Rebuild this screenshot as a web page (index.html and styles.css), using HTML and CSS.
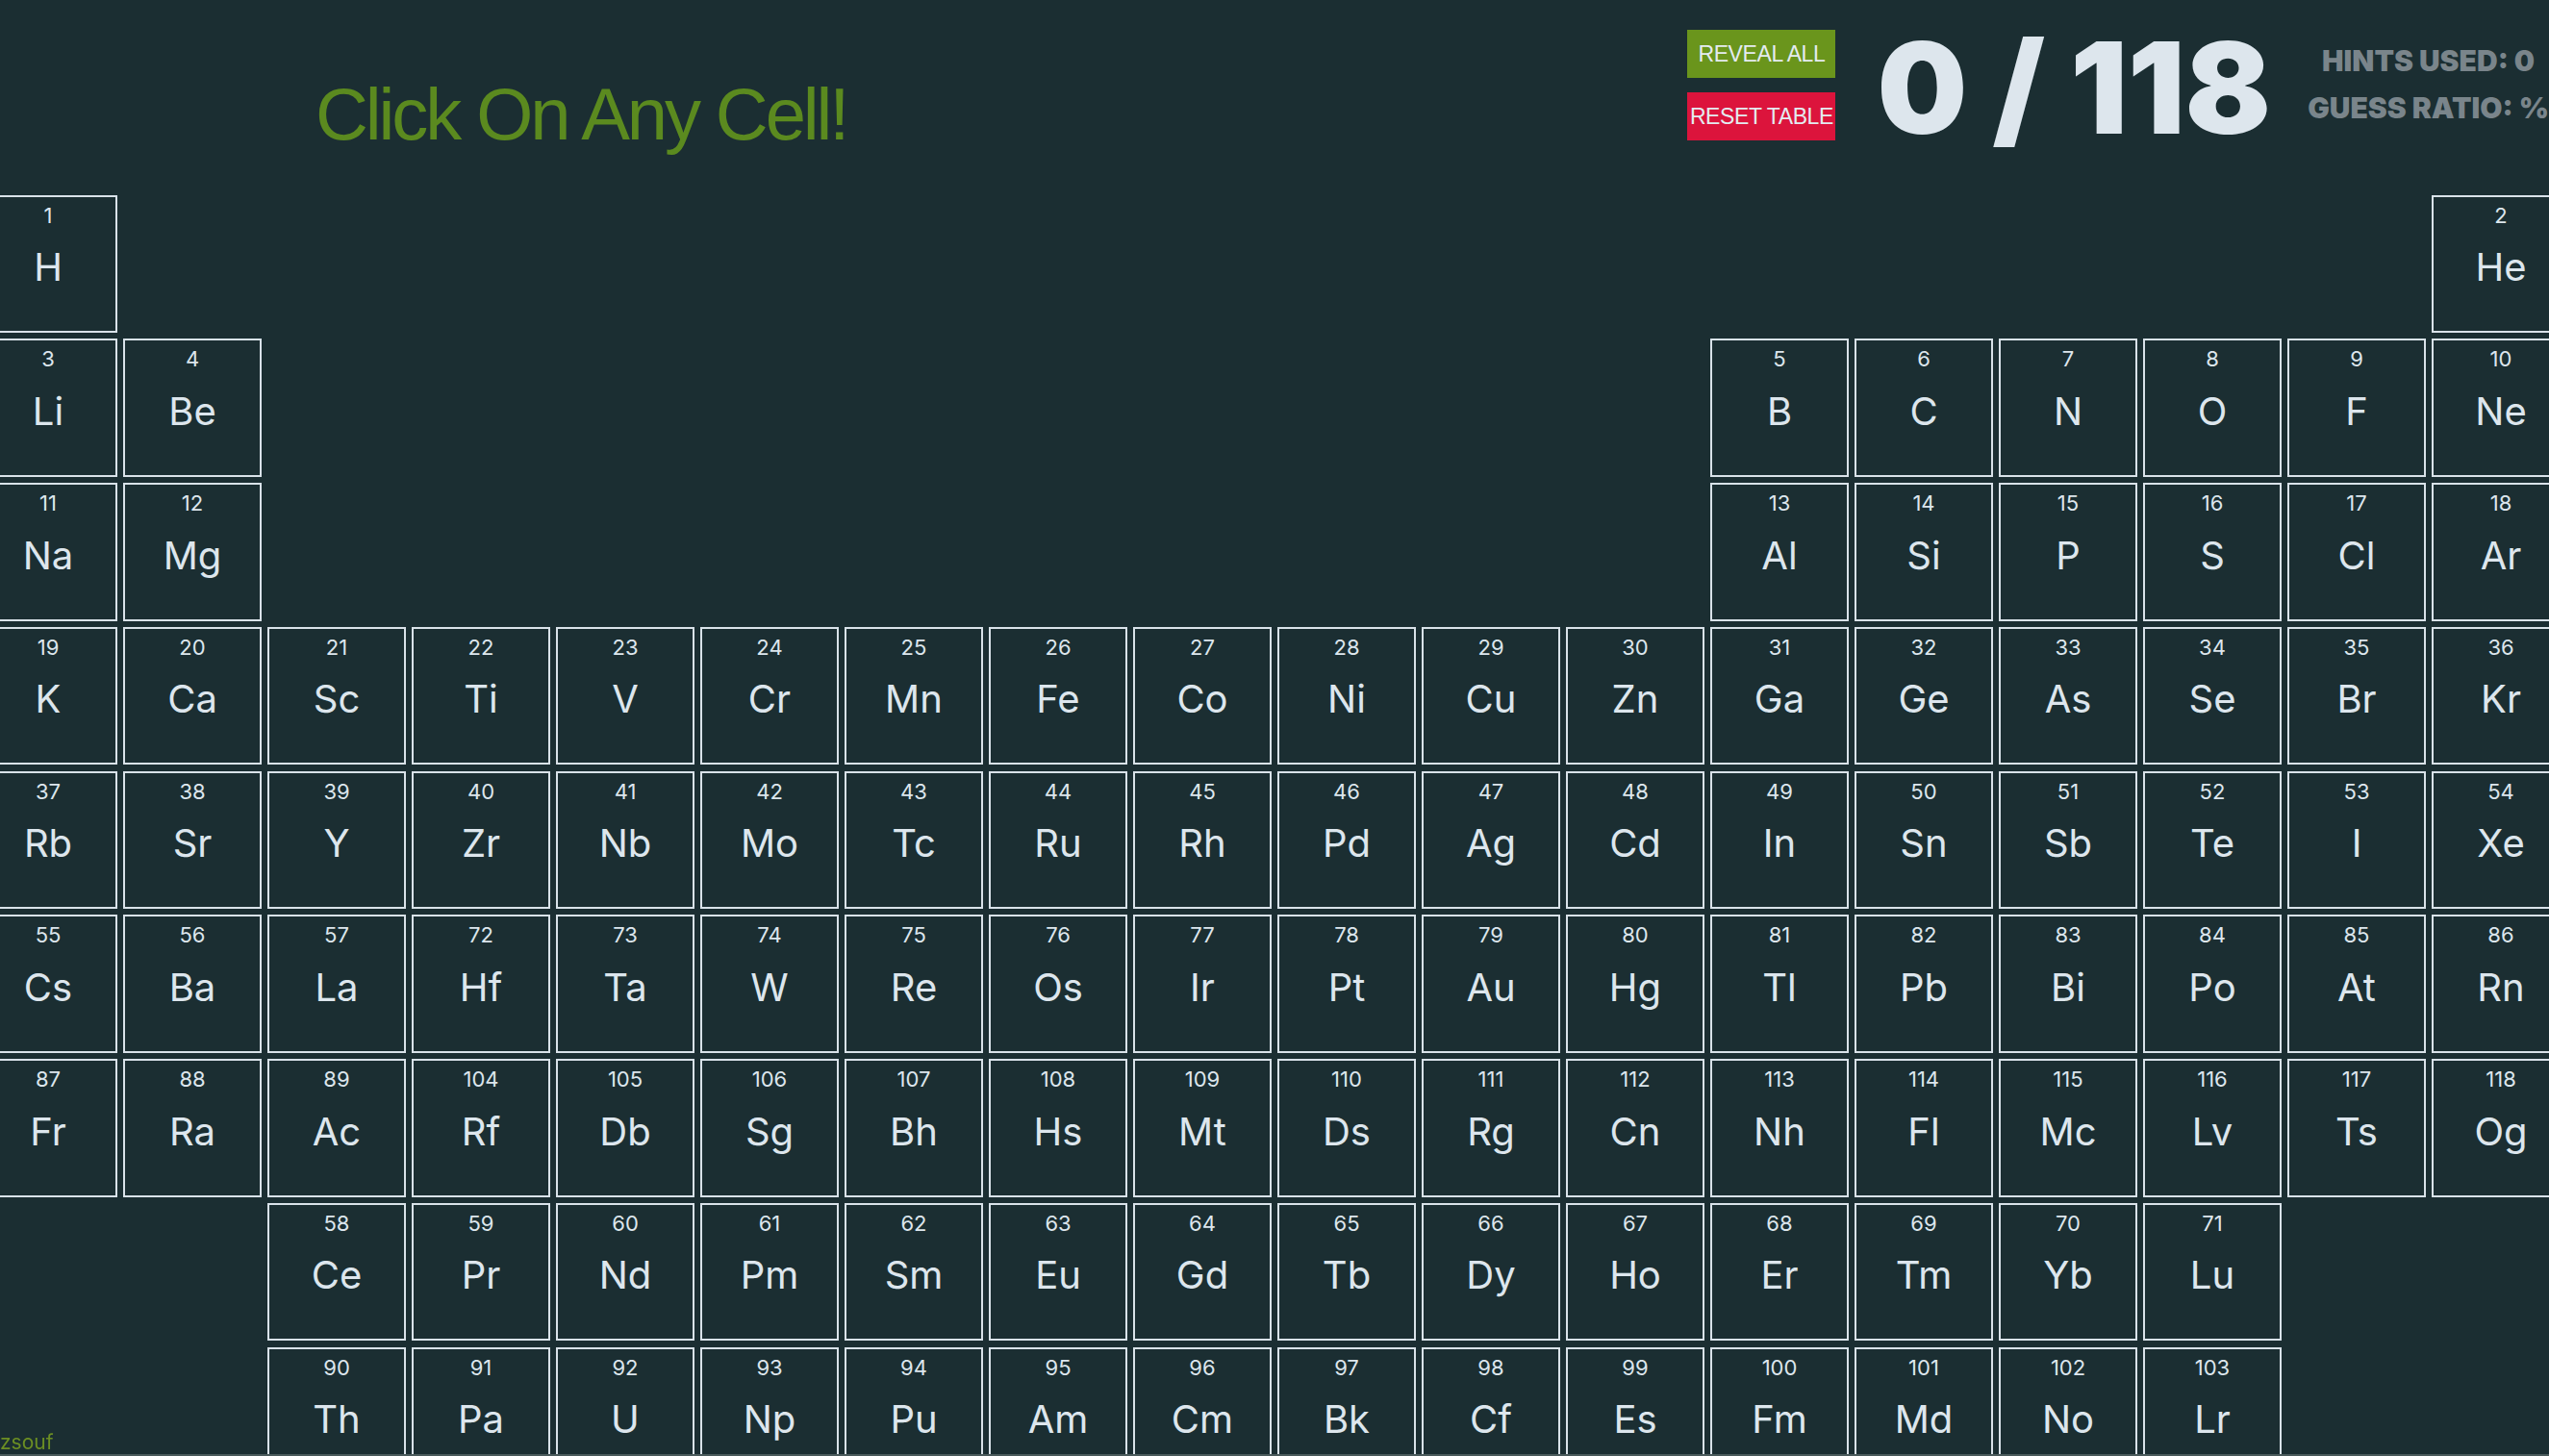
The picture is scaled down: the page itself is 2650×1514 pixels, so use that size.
FILE: index.html
```html
<!DOCTYPE html>
<html lang="en">
<head>
<meta charset="utf-8">
<title>Periodic Table Quiz</title>
<link rel="stylesheet" href="styles.css">
</head>
<body>
<header class="top">
  <h1 class="title">Click On Any Cell!</h1>
  <div class="controls">
    <div class="buttons">
      <button class="btn btn-reveal">REVEAL ALL</button>
      <button class="btn btn-reset">RESET TABLE</button>
    </div>
    <div class="counter">0 / 118</div>
    <div class="stats">
      <div>HINTS USED: 0</div>
      <div>GUESS RATIO: %</div>
    </div>
  </div>
</header>
<main class="table-wrap">
  <div class="table">
    <div class="cell"><span class="num">1</span><span class="sym">H</span></div>
    <div class="gap16"></div>
    <div class="cell"><span class="num">2</span><span class="sym">He</span></div>

    <div class="cell"><span class="num">3</span><span class="sym">Li</span></div>
    <div class="cell"><span class="num">4</span><span class="sym">Be</span></div>
    <div class="gap10"></div>
    <div class="cell"><span class="num">5</span><span class="sym">B</span></div>
    <div class="cell"><span class="num">6</span><span class="sym">C</span></div>
    <div class="cell"><span class="num">7</span><span class="sym">N</span></div>
    <div class="cell"><span class="num">8</span><span class="sym">O</span></div>
    <div class="cell"><span class="num">9</span><span class="sym">F</span></div>
    <div class="cell"><span class="num">10</span><span class="sym">Ne</span></div>

    <div class="cell"><span class="num">11</span><span class="sym">Na</span></div>
    <div class="cell"><span class="num">12</span><span class="sym">Mg</span></div>
    <div class="gap10"></div>
    <div class="cell"><span class="num">13</span><span class="sym">Al</span></div>
    <div class="cell"><span class="num">14</span><span class="sym">Si</span></div>
    <div class="cell"><span class="num">15</span><span class="sym">P</span></div>
    <div class="cell"><span class="num">16</span><span class="sym">S</span></div>
    <div class="cell"><span class="num">17</span><span class="sym">Cl</span></div>
    <div class="cell"><span class="num">18</span><span class="sym">Ar</span></div>

    <div class="cell"><span class="num">19</span><span class="sym">K</span></div>
    <div class="cell"><span class="num">20</span><span class="sym">Ca</span></div>
    <div class="cell"><span class="num">21</span><span class="sym">Sc</span></div>
    <div class="cell"><span class="num">22</span><span class="sym">Ti</span></div>
    <div class="cell"><span class="num">23</span><span class="sym">V</span></div>
    <div class="cell"><span class="num">24</span><span class="sym">Cr</span></div>
    <div class="cell"><span class="num">25</span><span class="sym">Mn</span></div>
    <div class="cell"><span class="num">26</span><span class="sym">Fe</span></div>
    <div class="cell"><span class="num">27</span><span class="sym">Co</span></div>
    <div class="cell"><span class="num">28</span><span class="sym">Ni</span></div>
    <div class="cell"><span class="num">29</span><span class="sym">Cu</span></div>
    <div class="cell"><span class="num">30</span><span class="sym">Zn</span></div>
    <div class="cell"><span class="num">31</span><span class="sym">Ga</span></div>
    <div class="cell"><span class="num">32</span><span class="sym">Ge</span></div>
    <div class="cell"><span class="num">33</span><span class="sym">As</span></div>
    <div class="cell"><span class="num">34</span><span class="sym">Se</span></div>
    <div class="cell"><span class="num">35</span><span class="sym">Br</span></div>
    <div class="cell"><span class="num">36</span><span class="sym">Kr</span></div>

    <div class="cell"><span class="num">37</span><span class="sym">Rb</span></div>
    <div class="cell"><span class="num">38</span><span class="sym">Sr</span></div>
    <div class="cell"><span class="num">39</span><span class="sym">Y</span></div>
    <div class="cell"><span class="num">40</span><span class="sym">Zr</span></div>
    <div class="cell"><span class="num">41</span><span class="sym">Nb</span></div>
    <div class="cell"><span class="num">42</span><span class="sym">Mo</span></div>
    <div class="cell"><span class="num">43</span><span class="sym">Tc</span></div>
    <div class="cell"><span class="num">44</span><span class="sym">Ru</span></div>
    <div class="cell"><span class="num">45</span><span class="sym">Rh</span></div>
    <div class="cell"><span class="num">46</span><span class="sym">Pd</span></div>
    <div class="cell"><span class="num">47</span><span class="sym">Ag</span></div>
    <div class="cell"><span class="num">48</span><span class="sym">Cd</span></div>
    <div class="cell"><span class="num">49</span><span class="sym">In</span></div>
    <div class="cell"><span class="num">50</span><span class="sym">Sn</span></div>
    <div class="cell"><span class="num">51</span><span class="sym">Sb</span></div>
    <div class="cell"><span class="num">52</span><span class="sym">Te</span></div>
    <div class="cell"><span class="num">53</span><span class="sym">I</span></div>
    <div class="cell"><span class="num">54</span><span class="sym">Xe</span></div>

    <div class="cell"><span class="num">55</span><span class="sym">Cs</span></div>
    <div class="cell"><span class="num">56</span><span class="sym">Ba</span></div>
    <div class="cell"><span class="num">57</span><span class="sym">La</span></div>
    <div class="cell"><span class="num">72</span><span class="sym">Hf</span></div>
    <div class="cell"><span class="num">73</span><span class="sym">Ta</span></div>
    <div class="cell"><span class="num">74</span><span class="sym">W</span></div>
    <div class="cell"><span class="num">75</span><span class="sym">Re</span></div>
    <div class="cell"><span class="num">76</span><span class="sym">Os</span></div>
    <div class="cell"><span class="num">77</span><span class="sym">Ir</span></div>
    <div class="cell"><span class="num">78</span><span class="sym">Pt</span></div>
    <div class="cell"><span class="num">79</span><span class="sym">Au</span></div>
    <div class="cell"><span class="num">80</span><span class="sym">Hg</span></div>
    <div class="cell"><span class="num">81</span><span class="sym">Tl</span></div>
    <div class="cell"><span class="num">82</span><span class="sym">Pb</span></div>
    <div class="cell"><span class="num">83</span><span class="sym">Bi</span></div>
    <div class="cell"><span class="num">84</span><span class="sym">Po</span></div>
    <div class="cell"><span class="num">85</span><span class="sym">At</span></div>
    <div class="cell"><span class="num">86</span><span class="sym">Rn</span></div>

    <div class="cell"><span class="num">87</span><span class="sym">Fr</span></div>
    <div class="cell"><span class="num">88</span><span class="sym">Ra</span></div>
    <div class="cell"><span class="num">89</span><span class="sym">Ac</span></div>
    <div class="cell"><span class="num">104</span><span class="sym">Rf</span></div>
    <div class="cell"><span class="num">105</span><span class="sym">Db</span></div>
    <div class="cell"><span class="num">106</span><span class="sym">Sg</span></div>
    <div class="cell"><span class="num">107</span><span class="sym">Bh</span></div>
    <div class="cell"><span class="num">108</span><span class="sym">Hs</span></div>
    <div class="cell"><span class="num">109</span><span class="sym">Mt</span></div>
    <div class="cell"><span class="num">110</span><span class="sym">Ds</span></div>
    <div class="cell"><span class="num">111</span><span class="sym">Rg</span></div>
    <div class="cell"><span class="num">112</span><span class="sym">Cn</span></div>
    <div class="cell"><span class="num">113</span><span class="sym">Nh</span></div>
    <div class="cell"><span class="num">114</span><span class="sym">Fl</span></div>
    <div class="cell"><span class="num">115</span><span class="sym">Mc</span></div>
    <div class="cell"><span class="num">116</span><span class="sym">Lv</span></div>
    <div class="cell"><span class="num">117</span><span class="sym">Ts</span></div>
    <div class="cell"><span class="num">118</span><span class="sym">Og</span></div>

    <div class="gap2"></div>
    <div class="cell"><span class="num">58</span><span class="sym">Ce</span></div>
    <div class="cell"><span class="num">59</span><span class="sym">Pr</span></div>
    <div class="cell"><span class="num">60</span><span class="sym">Nd</span></div>
    <div class="cell"><span class="num">61</span><span class="sym">Pm</span></div>
    <div class="cell"><span class="num">62</span><span class="sym">Sm</span></div>
    <div class="cell"><span class="num">63</span><span class="sym">Eu</span></div>
    <div class="cell"><span class="num">64</span><span class="sym">Gd</span></div>
    <div class="cell"><span class="num">65</span><span class="sym">Tb</span></div>
    <div class="cell"><span class="num">66</span><span class="sym">Dy</span></div>
    <div class="cell"><span class="num">67</span><span class="sym">Ho</span></div>
    <div class="cell"><span class="num">68</span><span class="sym">Er</span></div>
    <div class="cell"><span class="num">69</span><span class="sym">Tm</span></div>
    <div class="cell"><span class="num">70</span><span class="sym">Yb</span></div>
    <div class="cell"><span class="num">71</span><span class="sym">Lu</span></div>
    <div class="gap2"></div>

    <div class="gap2"></div>
    <div class="cell"><span class="num">90</span><span class="sym">Th</span></div>
    <div class="cell"><span class="num">91</span><span class="sym">Pa</span></div>
    <div class="cell"><span class="num">92</span><span class="sym">U</span></div>
    <div class="cell"><span class="num">93</span><span class="sym">Np</span></div>
    <div class="cell"><span class="num">94</span><span class="sym">Pu</span></div>
    <div class="cell"><span class="num">95</span><span class="sym">Am</span></div>
    <div class="cell"><span class="num">96</span><span class="sym">Cm</span></div>
    <div class="cell"><span class="num">97</span><span class="sym">Bk</span></div>
    <div class="cell"><span class="num">98</span><span class="sym">Cf</span></div>
    <div class="cell"><span class="num">99</span><span class="sym">Es</span></div>
    <div class="cell"><span class="num">100</span><span class="sym">Fm</span></div>
    <div class="cell"><span class="num">101</span><span class="sym">Md</span></div>
    <div class="cell"><span class="num">102</span><span class="sym">No</span></div>
    <div class="cell"><span class="num">103</span><span class="sym">Lr</span></div>
    <div class="gap2"></div>
  </div>
</main>
<footer class="footer">zsouf</footer>
</body>
</html>
```

FILE: styles.css
```css
* {
  box-sizing: border-box;
}

html, body {
  margin: 0;
  padding: 0;
  background: #1b2e32;
  overflow: hidden;
  height: 100%;
}

body {
  font-family: Inter, "Liberation Sans", sans-serif;
  color: #dde6ed;
}

.top {
  display: flex;
  align-items: flex-start;
  height: 202.7px;
  padding-left: 328px;
}

.title {
  margin: 81px 0 0 0;
  font-family: "Liberation Sans", Arial, sans-serif;
  font-size: 76px;
  line-height: 1;
  font-weight: 400;
  letter-spacing: -3.1px;
  color: #5b8a1f;
  white-space: nowrap;
}

.controls {
  margin-left: auto;
  display: flex;
  align-items: flex-start;
}

.buttons {
  display: flex;
  flex-direction: column;
  gap: 15px;
  margin-top: 31px;
}

.btn {
  width: 154px;
  height: 50px;
  border: none;
  padding: 0;
  font-family: "Liberation Sans", Arial, sans-serif;
  font-size: 23px;
  color: #e4ebf0;
  white-space: nowrap;
  letter-spacing: -0.4px;
}

.btn-reveal {
  background: #6a951c;
}

.btn-reset {
  background: #dc143c;
}

.counter {
  margin: 25px 0 0 43px;
  font-size: 132px;
  line-height: 1;
  font-weight: 900;
  color: #dde6ed;
  white-space: nowrap;
  letter-spacing: 0;
}

.stats {
  margin: 39px 0 0 38px;
  font-size: 30px;
  line-height: 49px;
  font-weight: 900;
  color: #7a858b;
  text-align: center;
  white-space: nowrap;
}

.table-wrap {
  display: flex;
  justify-content: center;
}

.table {
  flex: none;
  display: grid;
  grid-template-columns: repeat(18, 144px);
  grid-auto-rows: 143.5px;
  column-gap: 6px;
  row-gap: 6.25px;
}

.gap16 {
  grid-column: span 16;
}

.gap10 {
  grid-column: span 10;
}

.gap2 {
  grid-column: span 2;
}

.cell {
  border: 2px solid #d9e2e9;
  display: flex;
  flex-direction: column;
  align-items: center;
  padding-top: 8px;
}

.num {
  font-size: 22px;
  line-height: 22px;
  color: #dde6ed;
}

.sym {
  margin-top: 23.5px;
  font-size: 40px;
  line-height: 40px;
  color: #dde6ed;
}

.footer {
  position: fixed;
  left: 0;
  right: 0;
  bottom: 0;
  height: 26px;
  font-size: 21px;
  line-height: 24px;
  color: #6b8e23;
  border-bottom: 2px solid #4a5a5b;
}
```
